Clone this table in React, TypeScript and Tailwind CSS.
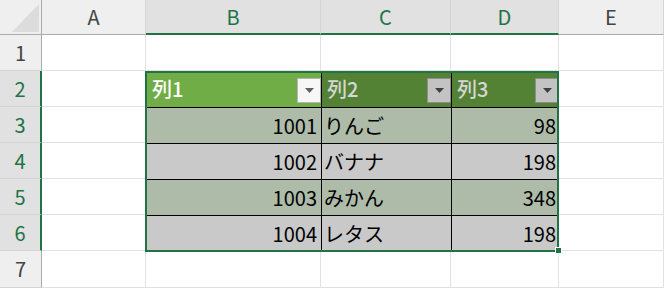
import React from 'react';

const cols = ['A', 'B', 'C', 'D', 'E'];
const selectedCols = ['B', 'C', 'D'];
const rowNums = [1, 2, 3, 4, 5, 6, 7];

const items = [
  { id: 1001, name: 'りんご', price: 98 },
  { id: 1002, name: 'バナナ', price: 198 },
  { id: 1003, name: 'みかん', price: 348 },
  { id: 1004, name: 'レタス', price: 198 },
];

const FilterButton = ({ active }: { active?: boolean }) => (
  <div
    className={`absolute right-0 top-[7px] w-[24px] h-[25px] flex items-center justify-center border ${
      active ? 'bg-[#f7f7f7] border-[#b5b5b5]' : 'bg-[#c3c3c3] border-[#8e8e8e]'
    }`}
  >
    <svg width="9" height="5" viewBox="0 0 9 5">
      <path d="M0 0h9L4.5 5z" fill={active ? '#606060' : '#404040'} />
    </svg>
  </div>
);

export default function App() {
  return (
    <div
      className="relative w-[664px] h-[288px] overflow-hidden bg-white"
      style={{ fontFamily: '"Noto Sans CJK JP", "Noto Sans", sans-serif' }}
    >
      <div className="grid grid-cols-[42px_104px_175px_130px_108px_105px] grid-rows-[35px_repeat(6,36px)_37px]">
        {/* corner */}
        <div className="relative bg-[#efefef] border-r border-b border-[#ababab]">
          <svg className="absolute left-[12px] top-[4px]" width="27" height="28" viewBox="0 0 27 28">
            <path d="M27 0V28H0z" fill="#dcdcdc" />
          </svg>
        </div>

        {/* column headers */}
        {cols.map((c) => {
          const sel = selectedCols.includes(c);
          return (
            <div
              key={c}
              className={`flex items-center justify-center text-[20px] border-r border-[#d4d4d4] ${
                sel
                  ? 'bg-[#e1e1e1] text-[#217346] border-b-2 border-b-[#217346]'
                  : 'bg-[#efefef] text-[#444] border-b border-b-[#ababab]'
              }`}
            >
              {c}
            </div>
          );
        })}

        {/* rows */}
        {rowNums.map((r) => {
          const sel = r >= 2 && r <= 6;
          return (
            <React.Fragment key={r}>
              <div
                className={`flex items-center justify-center text-[20px] border-b border-[#d4d4d4] ${
                  sel
                    ? 'bg-[#e1e1e1] text-[#217346] border-r-2 border-r-[#217346]'
                    : 'bg-[#efefef] text-[#444] border-r border-r-[#ababab]'
                }`}
              >
                {r}
              </div>
              <div className="border-r border-b border-[#e1e1e1]" />
              {r === 2 ? (
                <div className="col-span-3 row-span-5 grid grid-cols-[175px_130px_108px] grid-rows-[repeat(5,36px)] text-[20px] text-black">
                  <div className="relative flex items-center pl-[6px] bg-[#70ad47] text-white font-medium">
                    列1
                    <FilterButton active />
                  </div>
                  <div className="relative flex items-center pl-[5px] bg-[#548235] text-[#d6d6d6] font-medium border-l border-black">
                    列2
                    <FilterButton />
                  </div>
                  <div className="relative flex items-center pl-[5px] bg-[#548235] text-[#d6d6d6] font-medium border-l border-black">
                    列3
                    <FilterButton />
                  </div>
                  {items.map((it, i) => {
                    const bg = i % 2 === 0 ? 'bg-[#aebba9]' : 'bg-[#c9c9c9]';
                    return (
                      <React.Fragment key={it.id}>
                        <div className={`flex items-center justify-end pr-[4px] border-t border-black ${bg}`}>
                          {it.id}
                        </div>
                        <div className={`flex items-center pl-[2px] border-t border-l border-black ${bg}`}>
                          {it.name}
                        </div>
                        <div className={`flex items-center justify-end pr-[3px] border-t border-l border-black ${bg}`}>
                          {it.price}
                        </div>
                      </React.Fragment>
                    );
                  })}
                </div>
              ) : r > 2 && r <= 6 ? null : (
                <>
                  <div className="border-r border-b border-[#e1e1e1]" />
                  <div className="border-r border-b border-[#e1e1e1]" />
                  <div className="border-r border-b border-[#e1e1e1]" />
                </>
              )}
              <div className="border-r border-b border-[#e1e1e1]" />
            </React.Fragment>
          );
        })}
      </div>

      {/* selection outline with fill handle */}
      <div className="absolute left-[145px] top-[71px] w-[414px] h-[181px] border-2 border-[#217346] pointer-events-none" />
      <div className="absolute left-[555px] top-[247px] w-[7px] h-[7px] bg-[#217346] border border-white" />
    </div>
  );
}
